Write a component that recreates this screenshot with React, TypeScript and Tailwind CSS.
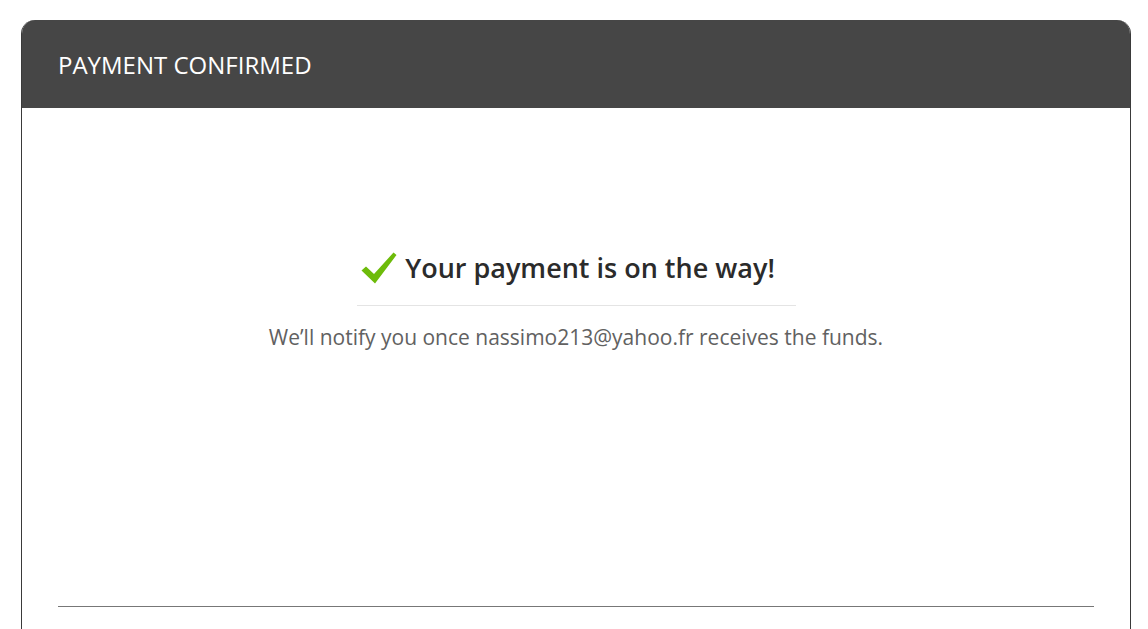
function CheckIcon() {
  return (
    <svg viewBox="0 0 36 32" className="h-[32px] w-[36px]" aria-hidden>
      <path d="M0.5 18.5 L5 14.5 L13 22 L32.5 0.5 L35.5 3 L14 31.5 Z" fill="#6dbb0a" />
    </svg>
  )
}

export default function App() {
  return (
    <div
      className="min-h-[629px] bg-white pt-[20px] pl-[21px] pr-[17px]"
      style={{ fontFamily: '"Open Sans", "Noto Sans", sans-serif' }}
    >
      <div className="overflow-hidden rounded-t-[14px] border-x border-[#3a3a3a] bg-white">
        <div className="flex h-[88px] items-center bg-[#464646] px-[36px]">
          <h1 className="pt-[2px] text-[24px] font-normal uppercase leading-none text-white">
            Payment Confirmed
          </h1>
        </div>

        <div className="flex flex-col items-center pt-[144px]">
          <div className="flex items-center gap-[8px] pr-[16px]">
            <CheckIcon />
            <h2 className="text-[27px] font-semibold leading-[32px] text-[#2b2b2b]">
              Your payment is on the way!
            </h2>
          </div>
          <div className="mt-[21px] h-px w-[439px] bg-[#e4e4e4]" />
          <p className="mt-[17px] text-[21px] leading-[28px] text-[#616161]">
            We’ll notify you once nassimo213@yahoo.fr receives the funds.
          </p>
        </div>

        <div className="mx-[36px] mt-[255px] h-px bg-[#777777]" />
        <div className="h-[40px]" />
      </div>
    </div>
  )
}
